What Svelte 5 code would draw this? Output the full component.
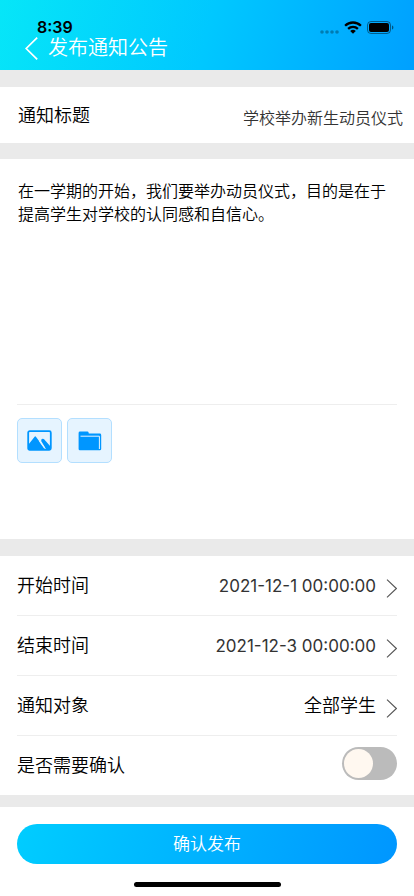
<script lang="ts">
	let title = $state('学校举办新生动员仪式');
	let content = $state(
		'在一学期的开始，我们要举办动员仪式，目的是在于提高学生对学校的认同感和自信心。'
	);
	let needConfirm = $state(false);

	const rows = [
		{ label: '开始时间', value: '2021-12-1 00:00:00', strong: false },
		{ label: '结束时间', value: '2021-12-3 00:00:00', strong: false },
		{ label: '通知对象', value: '全部学生', strong: true }
	];
</script>

<div class="page">
	<header>
		<div class="status">
			<span class="time">8:39</span>
			<span class="indicators">
				<svg class="dots" width="19" height="4" viewBox="0 0 19 4" aria-hidden="true">
					<circle cx="2" cy="2" r="1.8" />
					<circle cx="7" cy="2" r="1.8" />
					<circle cx="12" cy="2" r="1.8" />
					<circle cx="17" cy="2" r="1.8" />
				</svg>
				<svg width="18" height="13" viewBox="0 0 18 13" aria-hidden="true">
					<g fill="none" stroke="#000" stroke-width="2.3">
						<path d="M1.1 4.7a11.3 11.3 0 0 1 15.8 0" />
						<path d="M4.1 7.9a7 7 0 0 1 9.8 0" />
					</g>
					<path d="M6.2 10a4.1 4.1 0 0 1 5.6 0L9 12.8z" />
				</svg>
				<svg width="27" height="13" viewBox="0 0 27 13" aria-hidden="true">
					<rect x="0.5" y="0.5" width="23" height="12" rx="3.5" fill="none" stroke="#000" stroke-opacity="0.45" />
					<rect x="2" y="2" width="20" height="9" rx="2" />
					<path d="M25 4.5v4c.9-.3 1.4-1.1 1.4-2s-.5-1.7-1.4-2z" fill-opacity="0.5" />
				</svg>
			</span>
		</div>
		<div class="nav">
			<button class="back" type="button" aria-label="返回">
				<svg width="13" height="23" viewBox="0 0 13 23" aria-hidden="true">
					<path d="M12.2.6 1.2 11.5l11 10.9" fill="none" stroke="#fff" stroke-width="1.7" />
				</svg>
			</button>
			<h1>发布通知公告</h1>
		</div>
	</header>

	<section class="title-row">
		<label for="title">通知标题</label>
		<input id="title" type="text" bind:value={title} />
	</section>

	<section class="editor">
		<textarea aria-label="通知内容" bind:value={content}></textarea>
		<div class="attachments">
			<button type="button" aria-label="添加图片">
				<svg width="25" height="21" viewBox="0 0 25 21" aria-hidden="true">
					<rect x="1.2" y="1.2" width="22.6" height="18.6" rx="1.5" fill="none" stroke="#0096ff" stroke-width="1.8" />
					<path d="M1.5 14.5 7.6 6.7q.6-.8 1.3 0L18 19H1.500z" fill="#0096ff" />
					<path d="M14.5 11.5q-.8-1.5.3-2.4 1.3-.9 2.3.1l6 6.800V19h-4.200z" fill="#0096ff" />
					<path d="M12.5 11 17.6 18.2" fill="none" stroke="#e6f4ff" stroke-width="1.2" />
				</svg>
			</button>
			<button type="button" aria-label="添加文件">
				<svg width="24" height="20" viewBox="0 0 24 20" aria-hidden="true">
					<path d="M2 .5h7.5q.8 0 1 .8l.3 1.2h11q1.4 0 1.4 1.4v14q0 1.3-1.4 1.3H2q-1.4 0-1.4-1.3v-16Q.6.5 2 .5z" fill="#0096ff" />
					<path d="M2.5 5.2h18.900V18" fill="none" stroke="#e6f4ff" stroke-width="1" />
				</svg>
			</button>
		</div>
	</section>

	<section class="settings">
		{#each rows as row}
			<button class="row" type="button">
				<span>{row.label}</span>
				<span class="value" class:strong={row.strong}>{row.value}</span>
				<svg class="arrow" width="11" height="19" viewBox="0 0 11 19" aria-hidden="true">
					<path d="M1 .6l9.400 8.900L1 18.400" fill="none" stroke="#555" stroke-width="1.1" />
				</svg>
			</button>
		{/each}
		<div class="row">
			<label for="confirm">是否需要确认</label>
			<input id="confirm" class="switch" type="checkbox" role="switch" bind:checked={needConfirm} />
		</div>
	</section>

	<footer>
		<button class="submit" type="button">确认发布</button>
		<div class="home-bar"></div>
	</footer>
</div>

<style>
	:global(body) {
		background: #fff;
	}

	.page {
		display: flex;
		flex-direction: column;
		min-height: 100vh;
		background: #eaeaea;
		color: #000;
		font-family: Inter, 'Noto Sans CJK SC', sans-serif;
		font-size: 18px;
		font-weight: 350;
		line-height: 24px;
	}

	button,
	input,
	textarea {
		margin: 0;
		padding: 0;
		border: 0;
		background: none;
		color: inherit;
		font: inherit;
	}

	button {
		cursor: pointer;
	}

	svg {
		display: block;
		flex: none;
	}

	header {
		padding: 18px 20px 10px 25px;
		background: linear-gradient(105deg, #06e6f8 0%, #00c8ff 50%, #00a0ff 100%);
	}

	.status {
		display: flex;
		align-items: center;
		justify-content: space-between;
		height: 18px;
		padding-left: 12px;
		color: #000;
	}

	.time {
		font-size: 16px;
		font-weight: 600;
	}

	.indicators {
		display: flex;
		align-items: center;
		gap: 5px;
	}

	.dots {
		align-self: flex-end;
		fill-opacity: 0.3;
	}

	.nav {
		display: flex;
		align-items: center;
		gap: 10px;
		height: 24px;
		color: #fff;
	}

	h1 {
		margin: 0;
		font-size: 20px;
		font-weight: 350;
	}

	.title-row {
		display: flex;
		align-items: center;
		box-sizing: border-box;
		height: 56px;
		margin: 17px 0 16px;
		padding: 2px 11px 0 18px;
		background: #fff;
	}

	.title-row label {
		flex: none;
	}

	.title-row input {
		flex: 1;
		min-width: 0;
		padding-top: 3px;
		color: #333;
		font-size: 16px;
		text-align: right;
	}

	.editor {
		padding: 0 17px 76px;
		background: #fff;
	}

	textarea {
		display: block;
		box-sizing: border-box;
		width: 100%;
		height: 246px;
		padding: 21px 0 0 1px;
		border-bottom: 1px solid #eee;
		font-size: 16px;
		line-height: 23px;
		resize: none;
		outline: none;
	}

	.attachments {
		display: flex;
		gap: 5px;
		padding-top: 13px;
	}

	.attachments button {
		display: flex;
		align-items: center;
		justify-content: center;
		box-sizing: border-box;
		width: 45px;
		height: 45px;
		border: 1px solid #b3dfff;
		border-radius: 5px;
		background: #e6f4ff;
	}

	.settings {
		margin: 17px 0 12px;
		padding: 0 17px;
		background: #fff;
	}

	.row {
		display: flex;
		align-items: center;
		box-sizing: border-box;
		width: 100%;
		height: 60px;
		border-bottom: 1px solid #eee;
		text-align: left;
	}

	.row:last-child {
		justify-content: space-between;
		height: 59px;
		border-bottom: 0;
	}

	.value {
		flex: 1;
		color: #333;
		font-size: 17px;
		font-weight: 400;
		text-align: right;
	}

	.value.strong {
		color: #000;
		font-size: 18px;
		font-weight: 350;
	}

	.arrow {
		margin: 6px 0 0 10px;
	}

	.switch {
		appearance: none;
		display: flex;
		align-items: center;
		box-sizing: border-box;
		width: 55px;
		height: 33px;
		margin-bottom: 4px;
		padding: 0 2px;
		border-radius: 17px;
		background: #bbb;
		cursor: pointer;
	}

	.switch::before {
		content: '';
		width: 29px;
		height: 29px;
		border-radius: 50%;
		background: #fff8f0;
	}

	.switch:checked {
		justify-content: flex-end;
		background: #00a0ff;
	}

	footer {
		display: flex;
		flex: 1;
		flex-direction: column;
		align-items: center;
		padding: 17px 17px 9px;
		background: #fff;
	}

	.submit {
		width: 100%;
		height: 40px;
		border-radius: 20px;
		background: linear-gradient(105deg, #00cdff, #0096ff);
		color: #fff;
		font-size: 17px;
	}

	.home-bar {
		width: 147px;
		height: 5px;
		margin-top: auto;
		border-radius: 3px;
		background: #000;
	}
</style>
